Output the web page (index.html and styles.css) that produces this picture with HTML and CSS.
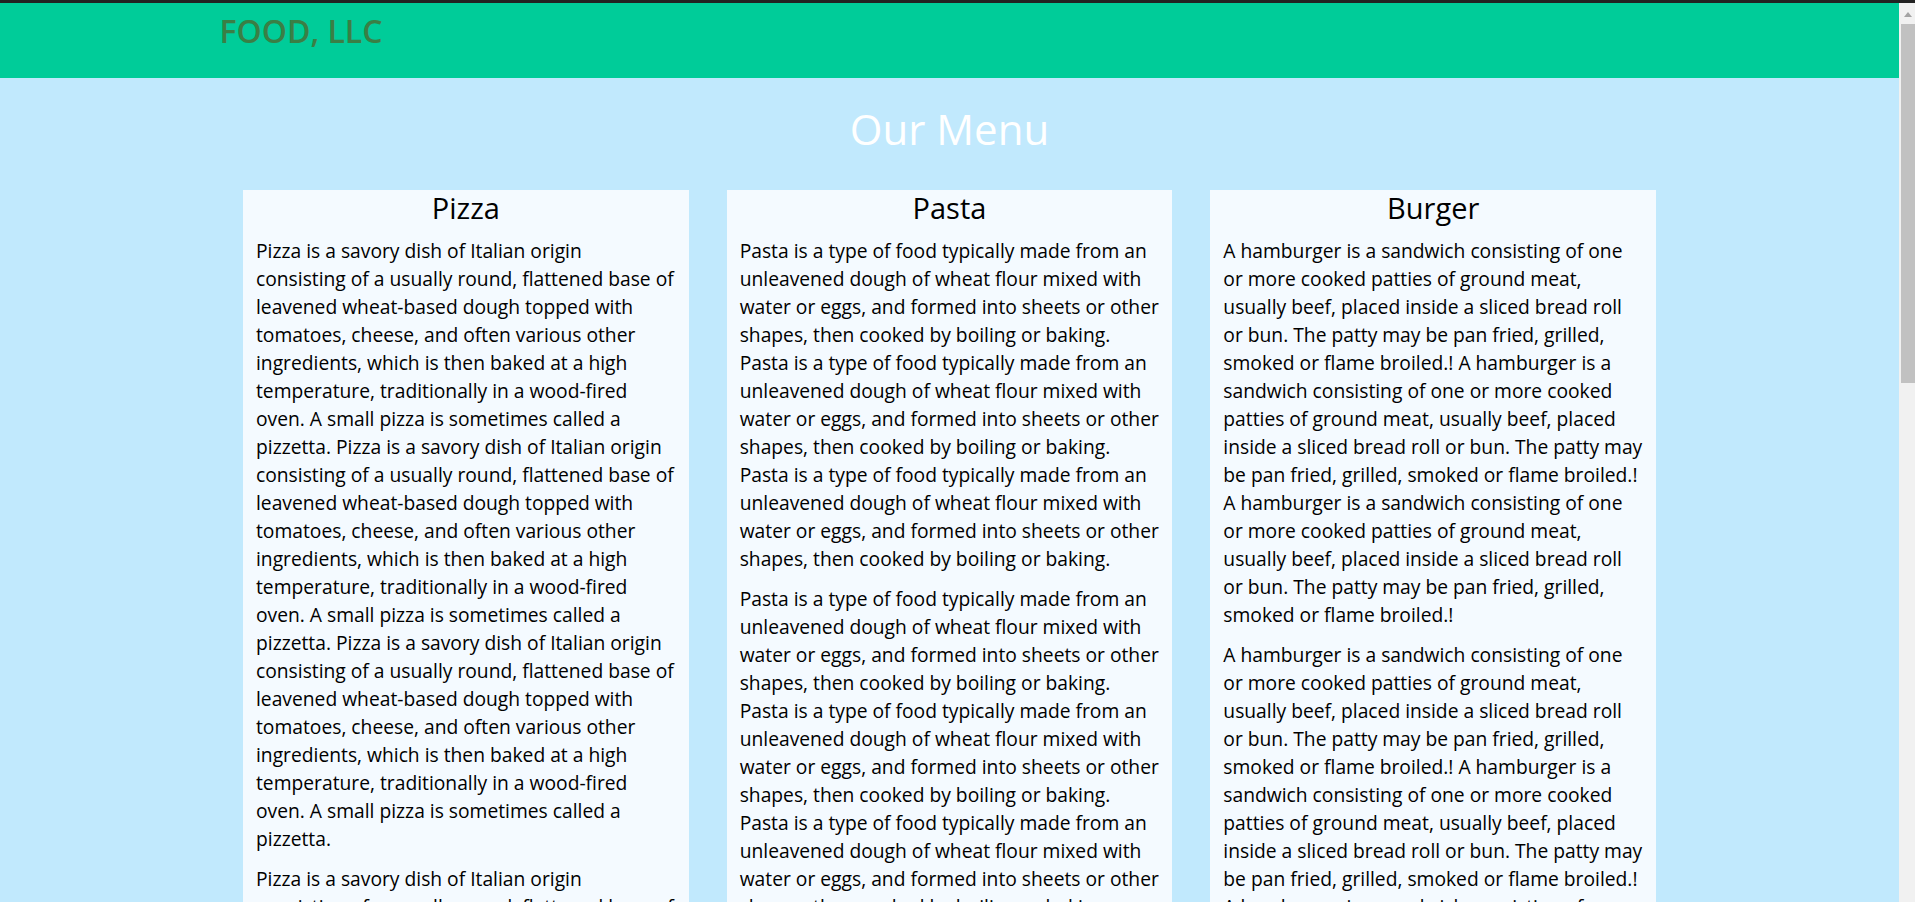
FILE: index.html
```html
<!DOCTYPE html>
<html lang="en">
<head>
<meta charset="utf-8">
<title>FOOD, LLC</title>
<link rel="stylesheet" href="styles.css">
</head>
<body>
<div class="topline"></div>
<div class="page">
  <header class="site-header">
    <div class="header-inner">
      <div class="brand">FOOD, LLC</div>
    </div>
  </header>
  <main class="menu">
    <h1 class="menu-title">Our Menu</h1>
    <div class="cards">
      <section class="card">
        <h2 class="card-title">Pizza</h2>
        <p>Pizza is a savory dish of Italian origin consisting of a usually round, flattened base of leavened wheat-based dough topped with tomatoes, cheese, and often various other ingredients, which is then baked at a high temperature, traditionally in a wood-fired oven. A small pizza is sometimes called a pizzetta. Pizza is a savory dish of Italian origin consisting of a usually round, flattened base of leavened wheat-based dough topped with tomatoes, cheese, and often various other ingredients, which is then baked at a high temperature, traditionally in a wood-fired oven. A small pizza is sometimes called a pizzetta. Pizza is a savory dish of Italian origin consisting of a usually round, flattened base of leavened wheat-based dough topped with tomatoes, cheese, and often various other ingredients, which is then baked at a high temperature, traditionally in a wood-fired oven. A small pizza is sometimes called a pizzetta.</p>
        <p>Pizza is a savory dish of Italian origin consisting of a usually round, flattened base of leavened wheat-based dough topped with tomatoes, cheese, and often various other ingredients, which is then baked at a high temperature, traditionally in a wood-fired oven. A small pizza is sometimes called a pizzetta. Pizza is a savory dish of Italian origin consisting of a usually round, flattened base of leavened wheat-based dough topped with tomatoes, cheese, and often various other ingredients, which is then baked at a high temperature, traditionally in a wood-fired oven. A small pizza is sometimes called a pizzetta.</p>
      </section>
      <section class="card">
        <h2 class="card-title">Pasta</h2>
        <p>Pasta is a type of food typically made from an unleavened dough of wheat flour mixed with water or eggs, and formed into sheets or other shapes, then cooked by boiling or baking. Pasta is a type of food typically made from an unleavened dough of wheat flour mixed with water or eggs, and formed into sheets or other shapes, then cooked by boiling or baking. Pasta is a type of food typically made from an unleavened dough of wheat flour mixed with water or eggs, and formed into sheets or other shapes, then cooked by boiling or baking.</p>
        <p>Pasta is a type of food typically made from an unleavened dough of wheat flour mixed with water or eggs, and formed into sheets or other shapes, then cooked by boiling or baking. Pasta is a type of food typically made from an unleavened dough of wheat flour mixed with water or eggs, and formed into sheets or other shapes, then cooked by boiling or baking. Pasta is a type of food typically made from an unleavened dough of wheat flour mixed with water or eggs, and formed into sheets or other shapes, then cooked by boiling or baking.</p>
      </section>
      <section class="card">
        <h2 class="card-title">Burger</h2>
        <p>A hamburger is a sandwich consisting of one or more cooked patties of ground meat, usually beef, placed inside a sliced bread roll or bun. The patty may be pan fried, grilled, smoked or flame broiled.! A hamburger is a sandwich consisting of one or more cooked patties of ground meat, usually beef, placed inside a sliced bread roll or bun. The patty may be pan fried, grilled, smoked or flame broiled.! A hamburger is a sandwich consisting of one or more cooked patties of ground meat, usually beef, placed inside a sliced bread roll or bun. The patty may be pan fried, grilled, smoked or flame broiled.!</p>
        <p>A hamburger is a sandwich consisting of one or more cooked patties of ground meat, usually beef, placed inside a sliced bread roll or bun. The patty may be pan fried, grilled, smoked or flame broiled.! A hamburger is a sandwich consisting of one or more cooked patties of ground meat, usually beef, placed inside a sliced bread roll or bun. The patty may be pan fried, grilled, smoked or flame broiled.! A hamburger is a sandwich consisting of one or more cooked patties of ground meat, usually beef, placed inside a sliced bread roll or bun. The patty may be pan fried, grilled, smoked or flame broiled.!</p>
      </section>
    </div>
  </main>
</div>
<div class="scrollbar" aria-hidden="true">
  <div class="scroll-arrow"></div>
  <div class="scroll-thumb"></div>
</div>
</body>
</html>
```
FILE: styles.css
```css
html, body {
  margin: 0;
  padding: 0;
}
body {
  background: #c1e9fd;
  font-family: "Open Sans", "Noto Sans", sans-serif;
  color: #000;
}
.topline {
  height: 3px;
  background: #222;
}
.page {
  margin-right: 16px;
}
.site-header {
  background: #00cc99;
  height: 75px;
  box-sizing: border-box;
  padding-top: 6px;
}
.header-inner {
  max-width: 1460px;
  margin: 0 auto;
}
.brand {
  font-size: 32px;
  font-weight: 600;
  line-height: 43px;
  color: #3a7f45;
}
.menu {
  padding-top: 22px;
  padding-bottom: 40px;
}
.menu-title {
  margin: 0 0 33px;
  text-align: center;
  font-size: 42px;
  font-weight: 400;
  line-height: 57px;
  color: #fff;
}
.cards {
  width: 1413px;
  margin: 0 auto;
  display: grid;
  grid-template-columns: repeat(3, 1fr);
  column-gap: 38px;
  align-items: start;
}
.card {
  background: #f4faff;
  padding: 0 13px 2px 13px;
}
.card-title {
  margin: 2px 0 14px;
  text-align: center;
  font-size: 29px;
  font-weight: 400;
  line-height: 31px;
}
.card p {
  margin: 0 0 12px;
  font-size: 19.25px;
  line-height: 28px;
}
.scrollbar {
  position: fixed;
  top: 3px;
  right: 0;
  bottom: 0;
  width: 16px;
  background: #f1f1f1;
}
.scroll-arrow {
  position: absolute;
  top: 9px;
  left: 5px;
  width: 0;
  height: 0;
  border-left: 4.5px solid transparent;
  border-right: 4.5px solid transparent;
  border-bottom: 5px solid #a3a3a3;
}
.scroll-thumb {
  position: absolute;
  top: 21px;
  left: 2px;
  right: 0;
  height: 359px;
  background: #c1c1c1;
}
```
